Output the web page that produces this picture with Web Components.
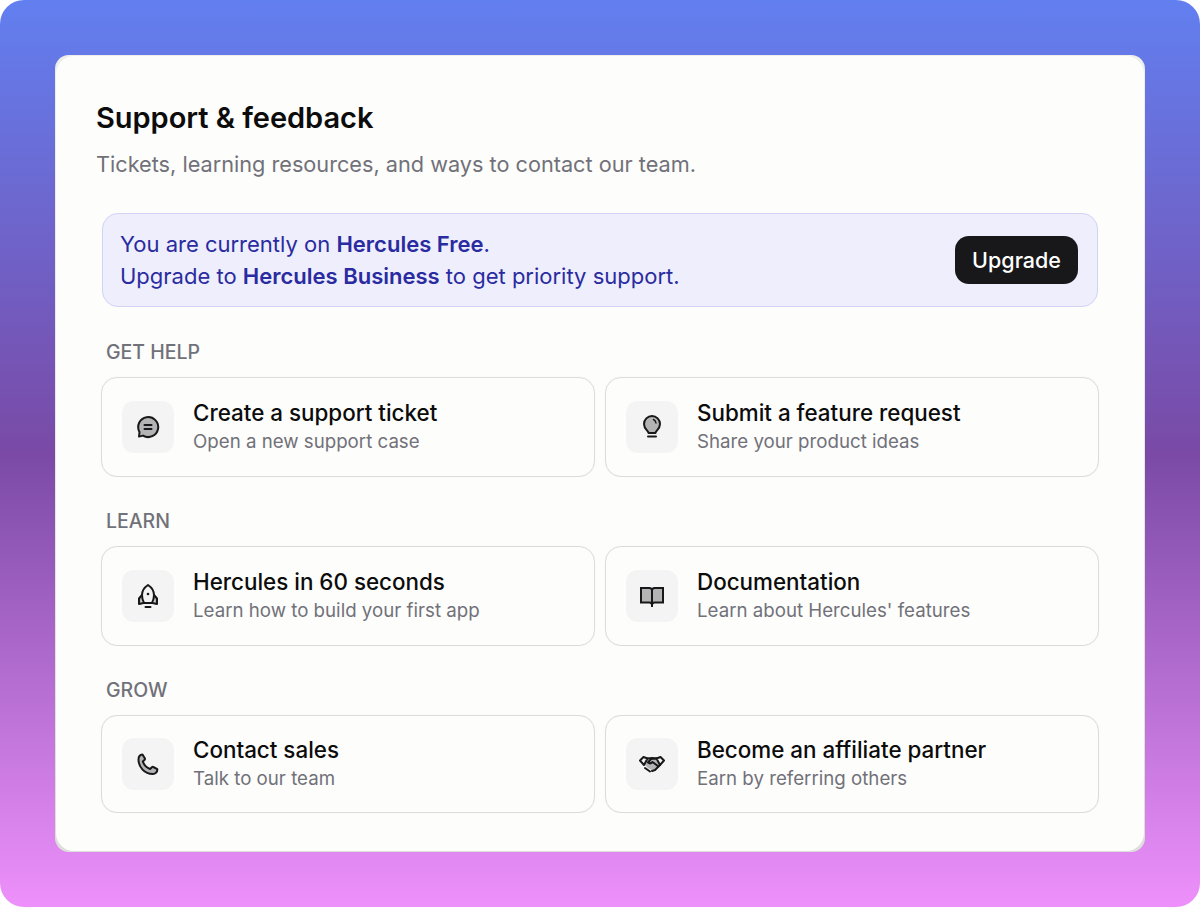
<!DOCTYPE html>
<html>
<head>
<meta charset="utf-8">
<title>Support & feedback</title>
<style>
  html, body { margin: 0; height: 100%; background: #fff; }
  body { font-family: Inter, "Liberation Sans", sans-serif; }
</style>
</head>
<body>
<template id="support-page-template">
 <style>
  :host {
      display: block;
      box-sizing: border-box;
      width: 1200px;
      height: 907px;
      padding: 55px;
      border-radius: 24px;
      background: linear-gradient(180deg, #627ff0 0%, #7a4aa6 50%, #ee90fb 100%);
  }
  .panel {
      box-sizing: border-box;
      height: 797px;
      padding: 1px;
      background: linear-gradient(180deg, #eeeeeb, #dededa);
      border-radius: 14px;
  }
  .inner {
      box-sizing: border-box;
      height: 100%;
      padding: 44px 45px 0 45px;
      background: #fdfdfb;
      border-radius: 18px;
  }
  h1 {
      margin: 0 0 0 -5px;
      font-size: 29px;
      line-height: 36px;
      font-weight: 600;
      letter-spacing: -0.03px;
      color: #0c0c0c;
  }
  p {
      margin: 14px 0 35px -5px;
      font-size: 21.7px;
      line-height: 28px;
      color: #71717a;
  }
 </style>
 <div class="panel">
  <div class="inner">
   <h1>Support &amp; feedback</h1>
   <p>Tickets, learning resources, and ways to contact our team.</p>
   <slot></slot>
  </div>
 </div>
</template>

<template id="plan-banner-template">
 <style>
  :host {
      display: flex;
      align-items: center;
      justify-content: space-between;
      box-sizing: border-box;
      height: 94px;
      margin: 0 1px 34px 1px;
      padding: 0 19px 0 17px;
      background: #eeeefc;
      border: 1px solid #d0d4f6;
      border-radius: 16px;
      color: #2a2ba0;
      font-size: 22px;
      line-height: 32px;
  }
  ::slotted(b) { font-weight: 600; }
  button {
      height: 48px;
      padding: 0 17px;
      border: none;
      border-radius: 14px;
      background: #18181a;
      color: #fff;
      font: 500 21.5px Inter, "Liberation Sans", sans-serif;
  }
 </style>
 <div><slot></slot></div>
 <button>Upgrade</button>
</template>

<template id="help-section-template">
 <style>
  :host { display: block; margin-top: 33px; }
  .label {
      margin: 0 0 14px 5px;
      font-size: 19.5px;
      line-height: 22px;
      font-weight: 500;
      color: #71717a;
  }
  .grid {
      display: grid;
      grid-template-columns: 494px 494px;
      gap: 10px;
  }
 </style>
 <div class="label"></div>
 <div class="grid"><slot></slot></div>
</template>

<template id="help-card-template">
 <style>
  :host {
      display: flex;
      align-items: center;
      gap: 19px;
      box-sizing: border-box;
      height: var(--card-height, 100px);
      padding: 0 20px;
      border: 1px solid #dcdcda;
      border-radius: 16px;
      box-shadow: 0 0 1px #e5e5e3;
  }
  .icon {
      flex: none;
      display: flex;
      align-items: center;
      justify-content: center;
      width: 52px;
      height: 52px;
      border-radius: 12px;
      background: #f4f4f5;
  }
  .title {
      font-size: 22.4px;
      line-height: 28px;
      font-weight: 500;
      color: #0c0c0c;
  }
  .sub {
      margin-top: 1px;
      font-size: 18.7px;
      line-height: 28px;
      color: #71717a;
  }
 </style>
 <div class="icon"><slot></slot></div>
 <div>
  <div class="title"></div>
  <div class="sub"></div>
 </div>
</template>

<support-page>
 <plan-banner>You are currently on <b>Hercules Free</b>.<br>Upgrade to <b>Hercules Business</b> to get priority support.</plan-banner>

 <help-section label="GET HELP">
  <help-card title-text="Create a support ticket" sub="Open a new support case">
   <svg width="26" height="26" viewBox="0 0 26 26" fill="none" stroke="#18181a" stroke-width="2" stroke-linecap="round" stroke-linejoin="round">
    <path fill="#b4b4b4" d="M4 22.600l4-1a10 10 0 1 0-3.500-3.600z"/>
    <path d="M9.500 11h7M9.500 15h7"/>
   </svg>
  </help-card>
  <help-card title-text="Submit a feature request" sub="Share your product ideas">
   <svg width="26" height="26" viewBox="0 0 26 26" fill="none" stroke="#18181a" stroke-width="2" stroke-linecap="round" stroke-linejoin="round">
    <path fill="#b4b4b4" d="M9.500 19c0-2.200-4.500-3.800-4.500-9a8 8 0 0 1 16 0c0 5.200-4.500 6.800-4.500 9z"/>
    <path d="M9 22.500h8"/>
    <path d="M14.500 5.500a4.500 4.500 0 0 1 2.500 3.500" stroke-width="1.400"/>
   </svg>
  </help-card>
 </help-section>

 <help-section label="LEARN">
  <help-card title-text="Hercules in 60 seconds" sub="Learn how to build your first app">
   <svg width="26" height="26" viewBox="0 0 26 26" fill="none" stroke="#18181a" stroke-width="2" stroke-linecap="round" stroke-linejoin="round">
    <path fill="#b4b4b4" stroke="none" d="M6.500 20l-2.500 0 0-5 3-3zM19.500 20l2.500 0 0-5-3-3z"/>
    <path d="M13 2c-3 2-6 6-6 10 0 3 1 6 2 8h8c1-2 2-5 2-8 0-4-3-8-6-10z"/>
    <path d="M7 12l-3 3.500V21l4.500-1M19 12l3 3.500V21l-4.500-1"/>
    <path d="M10.500 24h5"/>
    <circle cx="13" cy="11" r="1.300" fill="#18181a" stroke="none"/>
   </svg>
  </help-card>
  <help-card title-text="Documentation" sub="Learn about Hercules' features">
   <svg width="26" height="26" viewBox="0 0 26 26" fill="none" stroke="#18181a" stroke-width="2" stroke-linejoin="miter">
    <path fill="#b4b4b4" stroke="none" d="M2 5h8.500L13 7v14l-2.500-1.500H2zM24 5h-8.500L13 7v14l2.500-1.500H24z"/>
    <path d="M13 7.500A2.500 2.500 0 0 0 10.500 5H2v14.500h8.500A2.500 2.500 0 0 1 13 22a2.500 2.500 0 0 1 2.500-2.500H24V5h-8.500A2.500 2.500 0 0 0 13 7.500V24"/>
   </svg>
  </help-card>
 </help-section>

 <help-section label="GROW" style="--card-height: 98px">
  <help-card title-text="Contact sales" sub="Talk to our team">
   <svg width="26" height="26" viewBox="0 0 26 26" fill="none" stroke="#18181a" stroke-width="2" stroke-linecap="round" stroke-linejoin="round">
    <path fill="#b4b4b4" d="M7.500 3.500l2.300 3.800c.3.500.2 1-.2 1.400L7.800 10.400c1 3 4 6.300 7.300 7.600l1.800-1.800c.4-.4.900-.5 1.400-.2l4 2.200c.2 2.800-1.800 4.800-4.500 4.800C9.500 23 3.500 16 3.500 8.500c0-2.700 1.600-4.800 4-5z"/>
   </svg>
  </help-card>
  <help-card title-text="Become an affiliate partner" sub="Earn by referring others">
   <svg width="26" height="26" viewBox="0 0 26 26" fill="none" stroke="#18181a" stroke-width="2" stroke-linecap="round" stroke-linejoin="round">
    <path fill="#b4b4b4" stroke="none" d="M5 13l4-5 4 1 4-1 4 5-5 5-3 1-4-2z"/>
    <path d="M1 9.500l3.500-3.500 4 1.500L5 14zM25 9.500L21.500 6l-4 1.500L21 14z"/>
    <path d="M8.500 7.500L13 7l4.500.5M21 14l-5 5-3 1"/>
    <path d="M17 7.500l-5 .5-3 3.500c1.500 1.200 3 1.200 4.500-.5l6 4.500"/>
    <path d="M6 17l5 3.500"/>
   </svg>
  </help-card>
 </help-section>
</support-page>

<script>
 function mount(el, id) {
     el.attachShadow({ mode: 'open' });
     el.shadowRoot.appendChild(document.getElementById(id).content.cloneNode(true));
 }

 customElements.define('support-page', class SupportPage extends HTMLElement {
     constructor() {
         super();
         mount(this, 'support-page-template');
     }
 });

 customElements.define('plan-banner', class PlanBanner extends HTMLElement {
     constructor() {
         super();
         mount(this, 'plan-banner-template');
     }
 });

 customElements.define('help-section', class HelpSection extends HTMLElement {
     constructor() {
         super();
         mount(this, 'help-section-template');
     }
     connectedCallback() {
         this.shadowRoot.querySelector('.label').textContent = this.getAttribute('label');
     }
 });

 customElements.define('help-card', class HelpCard extends HTMLElement {
     constructor() {
         super();
         mount(this, 'help-card-template');
     }
     connectedCallback() {
         this.shadowRoot.querySelector('.title').textContent = this.getAttribute('title-text');
         this.shadowRoot.querySelector('.sub').textContent = this.getAttribute('sub');
     }
 });
</script>
</body>
</html>
